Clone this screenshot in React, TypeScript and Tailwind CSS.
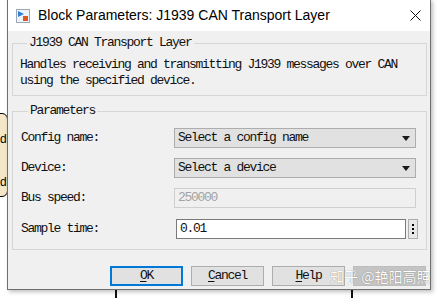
const Arrow = () => (
  <svg width="8" height="5" viewBox="0 0 8 5" className="shrink-0">
    <path d="M0 0 H8 L4 5 Z" fill="#1a1a1a" />
  </svg>
);

const SelectBox = ({ text }: { text: string }) => (
  <div className="flex-1 h-[20px] flex items-center justify-between pl-[3px] pr-[5px] bg-[#e1e1e1] border border-[#adadad]">
    <span>{text}</span>
    <Arrow />
  </div>
);

const Row = ({ label, children }: { label: string; children: React.ReactNode }) => (
  <div className="flex items-center h-[20px]">
    <div className="w-[153px] shrink-0">{label}</div>
    {children}
  </div>
);

const Button = ({ first, rest, focused }: { first: string; rest: string; focused?: boolean }) => (
  <div
    className={
      "w-[73px] h-[20px] flex items-center justify-center bg-[#e1e1e1] " +
      (focused ? "border-2 border-[#0078d7]" : "border border-[#adadad]")
    }
  >
    <span>
      <span className="underline underline-offset-[2px]">{first}</span>
      {rest}
    </span>
  </div>
);

export default function App() {
  return (
    <div className="relative w-[438px] h-[298px] bg-white overflow-hidden">
      {/* diagram behind the dialog */}
      <div className="absolute left-[-20px] top-[113px] w-[28px] h-[84px] rounded-[6px] border border-black bg-[#f3e7c8]" />
      <div className="absolute left-0 top-[133px] text-[12px] leading-none font-['Liberation_Sans',sans-serif] text-black">
        d
      </div>
      <div className="absolute left-0 top-[176px] text-[12px] leading-none font-['Liberation_Sans',sans-serif] text-black">
        d
      </div>
      <div className="absolute left-[115px] top-[285px] w-[2px] h-[20px] bg-[#111]" />
      <div className="absolute left-[351px] top-[285px] w-[2px] h-[20px] bg-[#111]" />

      {/* dialog */}
      <div className="absolute left-[7px] top-[-1px] w-[424px] h-[291px] border border-[#6f6f6f] bg-[#f0f0f0] shadow-[2px_2px_4px_rgba(0,0,0,0.25)] flex flex-col">
        <div className="h-[31px] shrink-0 bg-white flex items-center pl-[8px] pr-[9px] font-['Liberation_Sans',sans-serif] text-[14px] text-black">
          <svg width="14" height="14" viewBox="0 0 14 14" className="shrink-0">
            <rect x="0.5" y="0.5" width="13" height="13" fill="#eef3fa" stroke="#9aa7b8" />
            <path d="M2 2 L8 5 L2 8 Z" fill="#2f7fd6" />
            <rect x="7" y="7" width="5" height="5" fill="#e0571f" />
          </svg>
          <span className="ml-[8px]">Block Parameters: J1939 CAN Transport Layer</span>
          <svg width="11" height="11" viewBox="0 0 11 11" className="ml-auto">
            <path d="M0.5 0.5 L10.5 10.5 M10.5 0.5 L0.5 10.5" stroke="#111" strokeWidth="1" />
          </svg>
        </div>

        <div className="flex-1 flex flex-col pl-[4px] pr-[3px] text-[13px] leading-[16px] tracking-[-1.3px] text-[#111] font-['Liberation_Mono','Courier_New',monospace]">
          <fieldset className="mt-[4px] border border-[#d6d6d6] pl-[7px] pr-[8px] pt-[6px] pb-[6px]">
            <legend className="ml-[7px] px-[2px]">J1939 CAN Transport Layer</legend>
            <p>Handles receiving and transmitting J1939 messages over CAN</p>
            <p>using the specified device.</p>
          </fieldset>

          <fieldset className="mt-[7px] border border-[#d6d6d6] pl-[8px] pr-[10px] pt-[9px] pb-[10px] flex flex-col gap-[10px]">
            <legend className="ml-[7px] px-[2px]">Parameters</legend>
            <Row label="Config name:">
              <SelectBox text="Select a config name" />
            </Row>
            <Row label="Device:">
              <SelectBox text="Select a device" />
            </Row>
            <Row label="Bus speed:">
              <div className="flex-1 h-[20px] flex items-center pl-[3px] bg-[#f0f0f0] border border-[#cfcfcf] text-[#a3a3a3]">
                250000
              </div>
            </Row>
            <div className="mt-[1px]">
              <Row label="Sample time:">
                <div className="ml-[2px] flex-1 h-[20px] flex items-center pl-[3px] bg-white border border-[#7a7a7a]">
                  0.01
                </div>
                <div className="ml-[2px] mr-[-2px] w-[10px] h-[20px] flex flex-col items-center justify-center gap-[2px] bg-[#e8e8e8] border border-[#adadad]">
                  <span className="w-[2px] h-[2px] bg-black" />
                  <span className="w-[2px] h-[2px] bg-black" />
                  <span className="w-[2px] h-[2px] bg-black" />
                </div>
              </Row>
            </div>
          </fieldset>

          <div className="mt-[16px] flex justify-end gap-[8px] pr-[1px]">
            <Button first="O" rest="K" focused />
            <Button first="C" rest="ancel" />
            <Button first="H" rest="elp" />
            <div className="w-[73px] h-[20px] bg-[#c4c4c4] border border-[#bdbdbd]" />
          </div>
        </div>
      </div>

      {/* watermark */}
      <div className="absolute left-[330px] top-[266px] h-[20px] flex items-center text-[14px] leading-none text-white font-['Noto_Sans_CJK_SC',sans-serif] [text-shadow:0_0_1px_rgba(0,0,0,0.5)]">
        知乎 @艳阳高照
      </div>
    </div>
  );
}
